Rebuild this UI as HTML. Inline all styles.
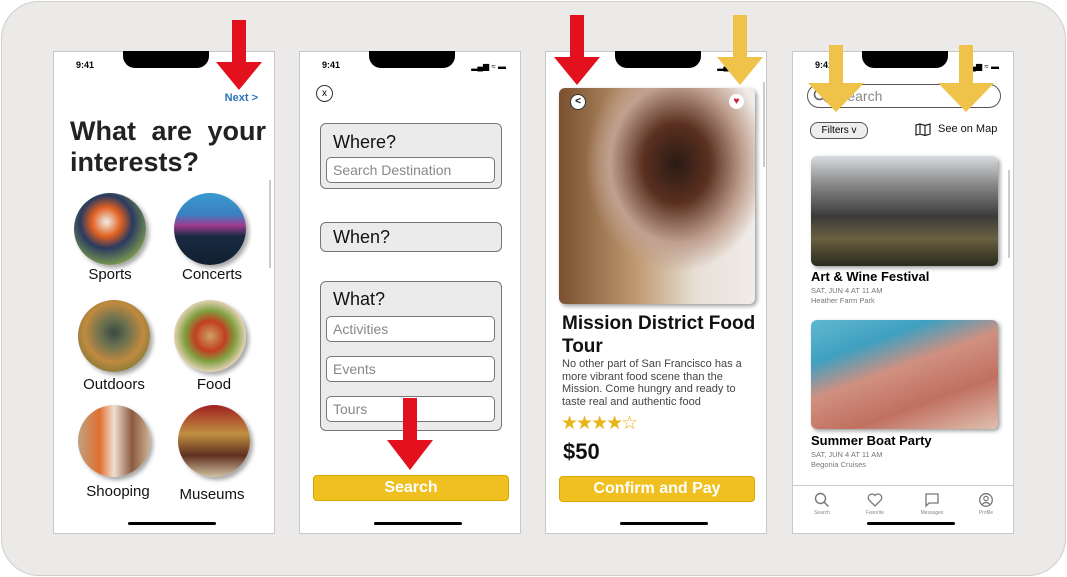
<!DOCTYPE html>
<html><head><style>
body{margin:0;width:1067px;height:577px;background:#fff;position:relative;overflow:hidden;font-family:"Liberation Sans",sans-serif}
.bg{position:absolute;left:1px;top:1px;width:1063px;height:573px;background:#ebeae8;border-radius:38px;border:1px solid #d0cfcc}
.ph{position:absolute;top:51px;width:222px;height:483px;background:#fff;border:1px solid #c8c8c8;box-sizing:border-box}
.notch{position:absolute;left:69px;top:-1px;width:86px;height:17px;background:#000;border-radius:0 0 12px 12px}
.time{position:absolute;left:22px;top:8px;font-size:9px;font-weight:bold}
.home{position:absolute;left:74px;bottom:8px;width:88px;height:3px;background:#000;border-radius:2px}
.abs{position:absolute}
.circ{position:absolute;width:72px;height:72px;border-radius:50%;box-shadow:3px 3px 4px rgba(0,0,0,.35)}
.lbl{position:absolute;font-size:15px;width:100px;text-align:center;color:#111}
.box{position:absolute;left:20px;width:182px;background:#ebebeb;border:1px solid #777;border-radius:6px;box-sizing:border-box}
.box .t{font-size:18px;color:#111;position:absolute;left:12px}
.inp{position:absolute;left:5px;width:169px;height:26px;background:#fff;border:1px solid #777;border-radius:5px;box-sizing:border-box;font-size:14px;color:#888;padding:4px 6px}
.btn{position:absolute;left:13px;width:196px;height:26px;background:#f0c020;border:1px solid #d8a800;border-radius:4px;box-sizing:border-box;color:#fff;font-weight:bold;font-size:16px;text-align:center;line-height:24px}
.sig{position:absolute;right:14px;top:10px;font-size:8px}
.nav{position:absolute;top:440px;font-size:5px;color:#888;text-align:center;width:30px}
</style></head><body>
<div class="bg"></div>

<div class="ph" style="left:53px">
<div class="notch"></div><div class="time">9:41</div>
<div class="abs" style="right:16px;top:40px;color:#2a73b8;font-weight:bold;font-size:11px">Next &gt;</div>
<div class="abs" style="left:16px;top:64px;font-size:27px;font-weight:bold;color:#222;line-height:31px;width:196px;text-align:justify;text-align-last:justify">What are your</div>
<div class="abs" style="left:16px;top:95px;font-size:27px;font-weight:bold;color:#222;line-height:31px">interests?</div>
<div class="abs" style="left:215px;top:128px;width:2px;height:88px;background:#ccc"></div>
<div class="circ" style="left:20px;top:141px;background:radial-gradient(circle at 45% 40%,#f0eee8 0,#e06020 25%,#2a3a60 45%,#7a9a50 75%)"></div>
<div class="circ" style="left:120px;top:141px;background:linear-gradient(#3a9ad0 0,#3a80c0 30%,#a03a90 45%,#1a2a40 60%,#102030)"></div>
<div class="lbl" style="left:6px;top:214px">Sports</div><div class="lbl" style="left:108px;top:214px">Concerts</div>
<div class="circ" style="left:24px;top:248px;background:radial-gradient(circle at 50% 45%,#3a4a40 0,#6a7050 25%,#c08a40 55%,#4a6a30)"></div>
<div class="circ" style="left:120px;top:248px;background:radial-gradient(circle,#d0a060 0,#c04020 30%,#80a040 50%,#e0d0b0 70%,#a08060)"></div>
<div class="lbl" style="left:10px;top:324px">Outdoors</div><div class="lbl" style="left:110px;top:324px">Food</div>
<div class="circ" style="left:24px;top:353px;background:linear-gradient(90deg,#c0a080,#e07030 30%,#f0e0d0 50%,#8a5a40 75%,#d0b090)"></div>
<div class="circ" style="left:124px;top:353px;background:linear-gradient(#a02020,#c09040 40%,#603020 70%,#d0c0a0)"></div>
<div class="lbl" style="left:14px;top:431px">Shooping</div><div class="lbl" style="left:108px;top:434px">Museums</div>
<div class="home"></div></div>

<div class="ph" style="left:299px">
<div class="notch"></div><div class="time">9:41</div><div class="sig">▂▄▆ ≈ ▬</div>
<div class="abs" style="left:16px;top:33px;width:15px;height:15px;border:1px solid #333;border-radius:50%;font-size:10px;text-align:center;line-height:15px">x</div>
<div class="box" style="top:71px;height:66px"><div class="t" style="top:8px">Where?</div><div class="inp" style="top:33px">Search Destination</div></div>
<div class="box" style="top:170px;height:30px"><div class="t" style="top:4px">When?</div></div>
<div class="box" style="top:229px;height:150px"><div class="t" style="top:7px">What?</div>
<div class="inp" style="top:34px">Activities</div><div class="inp" style="top:74px">Events</div><div class="inp" style="top:114px">Tours</div></div>
<div class="btn" style="top:423px">Search</div>
<div class="home"></div></div>

<div class="ph" style="left:545px">
<div class="notch"></div><div class="time">9:41</div><div class="sig">▂▄▆ ≈ ▬</div>
<div class="abs" style="left:13px;top:36px;width:196px;height:216px;border-radius:6px;box-shadow:2px 2px 4px rgba(0,0,0,.4);background:radial-gradient(ellipse at 60% 35%,#2a1a14 0,#5a3020 20%,#c0a090 40%,transparent 55%),linear-gradient(90deg,#7a5030,#c09a70 40%,#e8e0d8 70%,#f0ece8)"></div>
<div class="abs" style="left:24px;top:42px;width:14px;height:14px;border-radius:50%;background:#fff;border:1px solid #333;font-size:10px;font-weight:bold;text-align:center;line-height:14px">&lt;</div>
<div class="abs" style="left:183px;top:42px;width:15px;height:15px;border-radius:50%;background:#fff;color:#d02030;font-size:10px;text-align:center;line-height:15px">♥</div>
<div class="abs" style="left:217px;top:30px;width:2px;height:85px;background:#ccc"></div>
<div class="abs" style="left:16px;top:260px;font-size:19px;font-weight:bold;line-height:23px;color:#111;width:200px">Mission District Food Tour</div>
<div class="abs" style="left:16px;top:306px;font-size:11px;line-height:12.6px;color:#444;width:200px">No other part of San Francisco has a more vibrant food scene than the Mission. Come hungry and ready to taste real and authentic food</div>
<div class="abs" style="left:15px;top:360px;font-size:19px;color:#e8b418;letter-spacing:-2px">★★★★☆</div>
<div class="abs" style="left:17px;top:387px;font-size:22px;font-weight:bold;color:#111">$50</div>
<div class="btn" style="top:424px">Confirm and Pay</div>
<div class="home"></div></div>

<div class="ph" style="left:792px">
<div class="notch"></div><div class="time">9:41</div><div class="sig">▂▄▆ ≈ ▬</div>
<div class="abs" style="left:14px;top:32px;width:194px;height:24px;border:1px solid #555;border-radius:13px;box-sizing:border-box;font-size:14px;color:#888;padding:3px 0 0 30px">Search</div>
<svg class="abs" style="left:20px;top:36px" width="16" height="16"><circle cx="6.5" cy="6.5" r="5" fill="none" stroke="#666" stroke-width="1.6"/><line x1="10" y1="10" x2="14" y2="14" stroke="#666" stroke-width="1.6"/></svg>
<div class="abs" style="left:17px;top:70px;width:56px;height:15px;border:1px solid #555;border-radius:8px;background:#eee;font-size:10px;text-align:center;line-height:15px">Filters v</div>
<svg class="abs" style="left:122px;top:71px" width="16" height="13"><path d="M1 2 L5 1 L10 2.5 L15 1 L15 11 L10 12.5 L5 11 L1 12 Z M5 1 V11 M10 2.5 V12.5" fill="none" stroke="#222" stroke-width="1.2"/></svg>
<div class="abs" style="left:145px;top:71px;font-size:11px;color:#111">See on Map</div>
<div class="abs" style="left:18px;top:104px;width:187px;height:110px;border-radius:6px;box-shadow:2px 2px 4px rgba(0,0,0,.4);background:linear-gradient(#d8dce0 0,#8a8a8a 25%,#3a3a3a 55%,#6a6040 75%,#2a2a20)"></div>
<div class="abs" style="left:18px;top:217px;font-size:13px;font-weight:bold">Art &amp; Wine Festival</div>
<div class="abs" style="left:18px;top:234px;font-size:7.5px;color:#777;line-height:10px">SAT, JUN 4 AT 11 AM<br>Heather Farm Park</div>
<div class="abs" style="left:215px;top:118px;width:2px;height:88px;background:#ccc"></div>
<div class="abs" style="left:18px;top:268px;width:187px;height:109px;border-radius:6px;box-shadow:2px 2px 4px rgba(0,0,0,.4);background:linear-gradient(160deg,#60b8d0 0,#40a0c0 25%,#d09080 45%,#c07060 70%,#e0c0b0)"></div>
<div class="abs" style="left:18px;top:381px;font-size:13px;font-weight:bold">Summer Boat Party</div>
<div class="abs" style="left:18px;top:398px;font-size:7.5px;color:#777;line-height:10px">SAT, JUN 4 AT 11 AM<br>Begonia Cruises</div>
<div class="abs" style="left:0;top:433px;width:220px;height:1px;background:#ccc"></div>
<div class="nav" style="left:14px"><svg width="16" height="16"><circle cx="6.5" cy="6.5" r="5" fill="none" stroke="#777" stroke-width="1.4"/><line x1="10" y1="10" x2="14.5" y2="14.5" stroke="#777" stroke-width="1.5"/></svg><br>Search</div>
<div class="nav" style="left:67px"><svg width="16" height="16"><path d="M8 14 L2 8 A3.3 3.3 0 0 1 8 3.5 A3.3 3.3 0 0 1 14 8 Z" fill="none" stroke="#777" stroke-width="1.3"/></svg><br>Favorite</div>
<div class="nav" style="left:124px"><svg width="16" height="16"><path d="M2 2 H14 V11 H5 L2 14 Z" fill="none" stroke="#777" stroke-width="1.3"/></svg><br>Messages</div>
<div class="nav" style="left:178px"><svg width="16" height="16"><circle cx="8" cy="8" r="6.3" fill="none" stroke="#777" stroke-width="1.3"/><circle cx="8" cy="6.5" r="2.2" fill="none" stroke="#777" stroke-width="1.2"/><path d="M4 12.5 Q8 8.5 12 12.5" fill="none" stroke="#777" stroke-width="1.2"/></svg><br>Profile</div>
<div class="home"></div></div>

<svg class="abs" style="left:0;top:0" width="1067" height="577">
<g fill="#e3101e">
<polygon points="232,20 246,20 246,62 262,62 239,90 216,62 232,62"/>
<polygon points="570,15 584,15 584,57 600,57 577,85 554,57 570,57"/>
<polygon points="403,398 417,398 417,440 433,440 410,470 387,440 403,440"/>
</g>
<g fill="#efc24a">
<polygon points="733,15 747,15 747,57 763,57 740,85 717,57 733,57"/>
<polygon points="829,45 843,45 843,83 864,83 836,112 808,83 829,83"/>
<polygon points="959,45 973,45 973,83 994,83 966,112 938,83 959,83"/>
</g>
</svg>
</body></html>
